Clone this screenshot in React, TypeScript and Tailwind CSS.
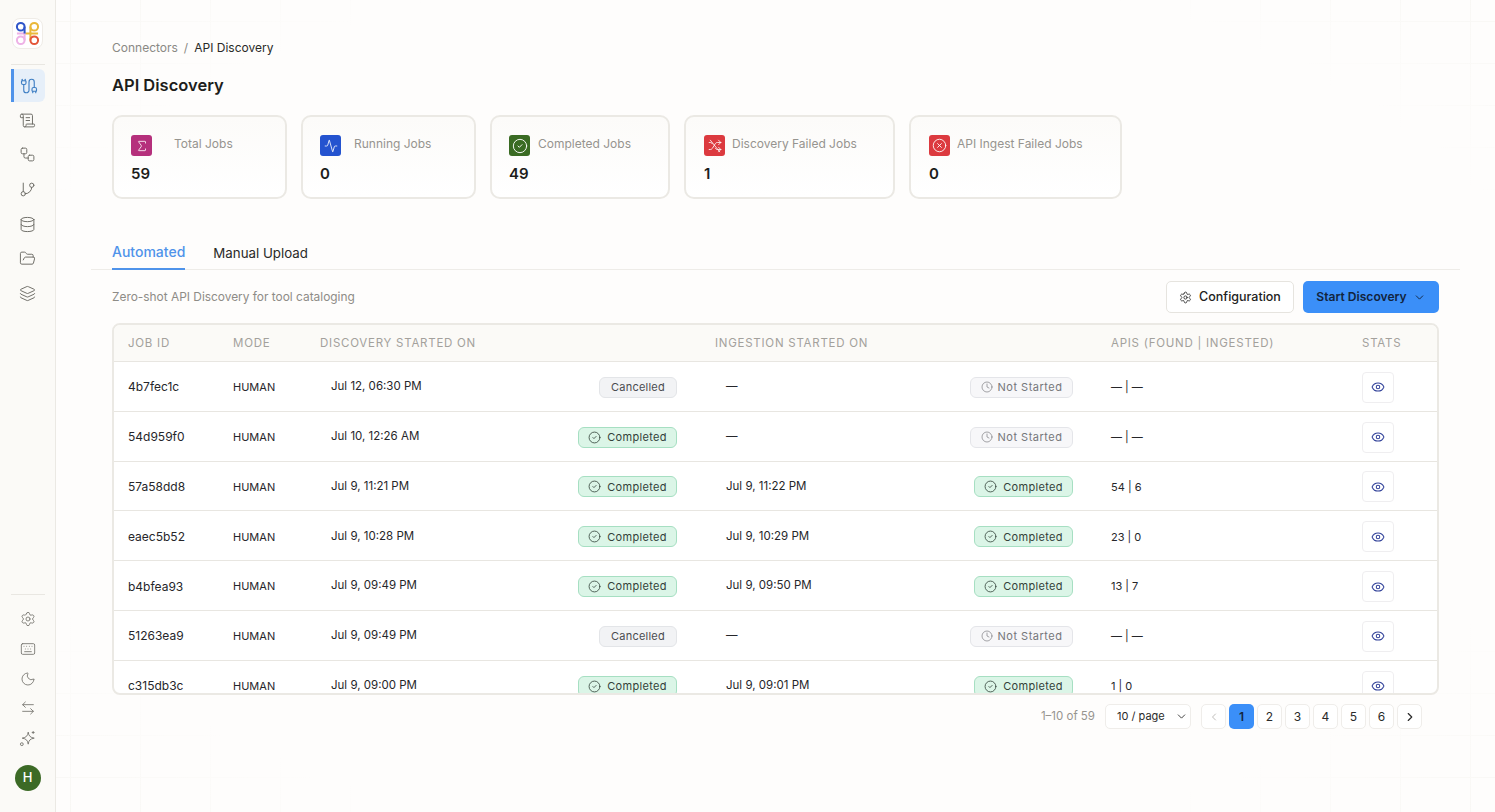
import { ChevronDown, ChevronLeft, ChevronRight, CircleCheck, CircleX, Clock, Database, Eye, FolderOpen, GitBranch, Keyboard, Layers, Moon, ArrowLeftRight, Settings, Sigma, Activity, ScrollText, Workflow, Cable } from "lucide-react";

type Status = "Cancelled" | "Completed" | "Not Started";

type Job = {
  id: string;
  started: string;
  status: Status;
  ingested: string;
  ingestStatus: Status;
  apis: string;
};

const jobs: Job[] = [
  { id: "4b7fec1c", started: "Jul 12, 06:30 PM", status: "Cancelled", ingested: "—", ingestStatus: "Not Started", apis: "— | —" },
  { id: "54d959f0", started: "Jul 10, 12:26 AM", status: "Completed", ingested: "—", ingestStatus: "Not Started", apis: "— | —" },
  { id: "57a58dd8", started: "Jul 9, 11:21 PM", status: "Completed", ingested: "Jul 9, 11:22 PM", ingestStatus: "Completed", apis: "54 | 6" },
  { id: "eaec5b52", started: "Jul 9, 10:28 PM", status: "Completed", ingested: "Jul 9, 10:29 PM", ingestStatus: "Completed", apis: "23 | 0" },
  { id: "b4bfea93", started: "Jul 9, 09:49 PM", status: "Completed", ingested: "Jul 9, 09:50 PM", ingestStatus: "Completed", apis: "13 | 7" },
  { id: "51263ea9", started: "Jul 9, 09:49 PM", status: "Cancelled", ingested: "—", ingestStatus: "Not Started", apis: "— | —" },
  { id: "c315db3c", started: "Jul 9, 09:00 PM", status: "Completed", ingested: "Jul 9, 09:01 PM", ingestStatus: "Completed", apis: "1 | 0" },
];

// lucide's shuffle with a strike through it, there is no such icon in the package
function ShuffleOff({ size, strokeWidth }: { size: number; strokeWidth: number }) {
  return (
    <svg width={size} height={size} viewBox="0 0 24 24" fill="none" stroke="currentColor" strokeWidth={strokeWidth} strokeLinecap="round" strokeLinejoin="round">
      <path d="m18 14 4 4-4 4" />
      <path d="m18 2 4 4-4 4" />
      <path d="M2 18h1.973a4 4 0 0 0 3.3-1.7l5.454-8.6a4 4 0 0 1 3.3-1.7H22" />
      <path d="M2 6h1.972a4 4 0 0 1 3.6 2.2" />
      <path d="M22 18h-6.041a4 4 0 0 1-3.3-1.8l-.359-.45" />
      <path d="M4 2l16 20" />
    </svg>
  );
}

const stats = [
  { label: "Total Jobs", value: "59", box: "w-[175px] pl-[17px]", gap: "gap-[22px]", bg: "bg-[#b5307c]", icon: Sigma, iconSize: 14 },
  { label: "Running Jobs", value: "0", box: "w-[175px] pl-[17px]", gap: "gap-[13px]", bg: "bg-[#2453cf]", icon: Activity, iconSize: 14 },
  { label: "Completed Jobs", value: "49", box: "w-[180px] pl-[17px]", gap: "gap-[8px]", bg: "bg-[#3a6b23]", icon: CircleCheck, iconSize: 16 },
  { label: "Discovery Failed Jobs", value: "1", box: "w-[211px] pl-[18px]", gap: "gap-[7px]", bg: "bg-[#dc3a3f]", icon: ShuffleOff, iconSize: 14 },
  { label: "API Ingest Failed Jobs", value: "0", box: "w-[213px] pl-[18px]", gap: "gap-[7px]", bg: "bg-[#dc3a3f]", icon: CircleX, iconSize: 15 },
];

const topNav = [ScrollText, Workflow, GitBranch, Database, FolderOpen, Layers];
const bottomNav = [Settings, Keyboard, Moon, ArrowLeftRight];

function Logo() {
  return (
    <div className="flex h-[31px] w-[31px] items-center justify-center rounded-lg border border-[#efece7] bg-white">
      <svg width="27" height="27" viewBox="0 0 24 24" fill="none" strokeWidth="1.8">
        <circle cx="18" cy="6" r="3.4" stroke="#eab83a" />
        <path d="M14.6 6V18M9 12H21.4" stroke="#eab83a" />
        <circle cx="6" cy="18" r="3.4" stroke="#eeb2e6" />
        <path d="M9.4 18V12H2.6" stroke="#eeb2e6" />
        <circle cx="6" cy="6" r="3.4" stroke="#2f55c9" />
        <path d="M9.4 6V12" stroke="#2f55c9" />
        <circle cx="18" cy="18" r="3.4" stroke="#e4573a" />
      </svg>
    </div>
  );
}

function SparkIcon() {
  return (
    <svg width="17" height="17" viewBox="0 0 24 24" fill="none" stroke="currentColor" strokeWidth="1.3">
      <path d="M13 3c.7 5.5 2.9 7.6 8.5 8.5-5.6.9-7.8 3-8.5 8.5-.7-5.5-2.9-7.6-8.5-8.5C10.100 10.600 12.300 8.500 13 3Z" />
      <circle cx="4" cy="20" r="2" />
      <path d="M20 1.500v4M18 3.500h4" />
    </svg>
  );
}

function Sidebar() {
  return (
    <aside className="flex h-[812px] w-[56px] shrink-0 flex-col items-center border-r border-[#ebe9e4] bg-[#fbfaf7] pt-[18px] pb-[21px]">
      <Logo />
      <div className="mt-[15px] h-px w-[34px] bg-[#e9e7e2]" />
      <div className="mt-[4px] flex h-[33px] w-[34px] items-center justify-center rounded-r-md border-l-[3px] border-[#4f93ea] bg-[#e6eff9] text-[#3f7fc4]">
        <Cable size={18} strokeWidth={1.5} />
      </div>
      <div className="mt-[1px] flex flex-col">
        {topNav.map((Icon, i) => (
          <div key={i} className="flex h-[34.6px] w-[34px] items-center justify-center text-[#6f6e68]">
            <Icon size={17} strokeWidth={1.4} />
          </div>
        ))}
      </div>
      <div className="mt-auto h-px w-[34px] bg-[#e9e7e2]" />
      <div className="mt-[9px] flex flex-col">
        {bottomNav.map((Icon, i) => (
          <div key={i} className="flex h-[29.75px] w-[34px] items-center justify-center text-[#75746e]">
            <Icon size={16} strokeWidth={1.3} />
          </div>
        ))}
        <div className="flex h-[29.75px] w-[34px] items-center justify-center text-[#75746e]">
          <SparkIcon />
        </div>
      </div>
      <div className="mt-[12px] flex h-[26px] w-[26px] items-center justify-center rounded-full bg-[#3c6a26] text-[13px] font-medium text-white">
        H
      </div>
    </aside>
  );
}

function StatCard({ label, value, box, gap, bg, icon: Icon, iconSize }: (typeof stats)[number]) {
  return (
    <div className={`h-[84px] rounded-[10px] border-2 border-[#ebe9e4] bg-gradient-to-b from-[#fcfbf9] to-white pt-[18px] ${box}`}>
      <div className={`flex h-[21px] items-center ${gap}`}>
        <div className={`flex h-[21px] w-[21px] items-center justify-center rounded-[3px] text-white ${bg}`}>
          <Icon size={iconSize} strokeWidth={1.4} />
        </div>
        <span className="-mt-[3px] text-[12px] text-[#96948f]">{label}</span>
      </div>
      <div className="mt-[9px] text-[15px] leading-[18px] font-semibold text-[#1d1d1b]">{value}</div>
    </div>
  );
}

function StatusBadge({ status }: { status: Status }) {
  if (status === "Completed") {
    return (
      <span className="flex h-[21px] w-[99px] items-center justify-center gap-[6px] rounded-[6px] border-[1.5px] border-[#a6dfc2] bg-[#dbf5e7] text-[11px] tracking-[0.03em] text-[#33423a]">
        <CircleCheck size={13} strokeWidth={1.5} />
        Completed
      </span>
    );
  }
  if (status === "Cancelled") {
    return (
      <span className="flex h-[21px] w-[78px] items-center justify-center rounded-[6px] border-[1.5px] border-[#e3e5e8] bg-[#f2f3f5] text-[11px] tracking-[0.02em] text-[#4a4c50]">
        Cancelled
      </span>
    );
  }
  return (
    <span className="flex h-[21px] w-[103px] items-center justify-center gap-[5px] rounded-[6px] border-[1.5px] border-[#e4e5e9] bg-[#f7f7f9] text-[11px] tracking-[0.045em] text-[#75767a]">
      <Clock size={12} strokeWidth={1.3} />
      Not Started
    </span>
  );
}

const gridCols = "grid grid-cols-[105px_87px_395px_396px_251px_1fr] items-center";

function JobsTable() {
  return (
    <div className="mt-[10px] h-[372px] overflow-hidden rounded-[8px] border-2 border-[#ebe9e4] bg-white">
      <div className={`${gridCols} h-[37px] border-b border-[#e8e6e1] bg-[#fbfaf7] pt-[2px] pl-[14px] text-[11.5px] tracking-[0.065em] text-[#a3a19c]`}>
        <span>JOB ID</span>
        <span>MODE</span>
        <span>DISCOVERY STARTED ON</span>
        <span>INGESTION STARTED ON</span>
        <span>APIS (FOUND | INGESTED)</span>
        <span>STATS</span>
      </div>
      {jobs.map((job) => (
        <div key={job.id} className={`${gridCols} h-[49.8px] border-b border-[#e8e6e1] pt-[2px] pl-[14px] text-[#26262a]`}>
          <span className="text-[12px]">{job.id}</span>
          <span className="text-[11px]">HUMAN</span>
          <div className="flex items-center justify-between pr-[38px] pl-[11px]">
            <span className="-mt-[1px] text-[11.5px]">{job.started}</span>
            <StatusBadge status={job.status} />
          </div>
          <div className="flex items-center justify-between pr-[38px] pl-[11px]">
            <span className="-mt-[1px] text-[11.5px]">{job.ingested}</span>
            <StatusBadge status={job.ingestStatus} />
          </div>
          <span className="text-[11px]">{job.apis}</span>
          <div className="flex h-[31px] w-[32px] items-center justify-center rounded-[4px] border border-[#efeef0] bg-white text-[#33439a]">
            <Eye size={14} strokeWidth={1.8} />
          </div>
        </div>
      ))}
    </div>
  );
}

function Pagination() {
  const pageButton = "flex h-[25px] w-[25px] items-center justify-center rounded-[5px] border border-[#efedea] bg-white text-[12px] text-[#2a2a2a]";
  return (
    <div className="mt-[9px] flex items-center justify-end pr-[17px]">
      <span className="text-[11.5px] text-[#96948f]">1–10 of 59</span>
      <div className="ml-[10px] flex h-[25px] w-[86px] items-center justify-between rounded-[5px] border border-[#efedea] bg-white pr-[2px] pl-[11px] text-[11px] text-[#2a2a2a]">
        10 / page
        <ChevronDown size={13} strokeWidth={1.6} />
      </div>
      <div className="ml-[10px] flex gap-[3px]">
        <div className="flex h-[25px] w-[25px] items-center justify-center rounded-[5px] border border-[#efedea] bg-white text-[#a3a19c]">
          <ChevronLeft size={12} strokeWidth={1.4} />
        </div>
        <div className="flex h-[25px] w-[25px] items-center justify-center rounded-[5px] bg-[#3b8ff8] text-[12px] font-semibold text-[#14263f]">
          1
        </div>
        {["2", "3", "4", "5", "6"].map((page) => (
          <div key={page} className={pageButton}>{page}</div>
        ))}
        <div className={pageButton}>
          <ChevronRight size={14} strokeWidth={2} />
        </div>
      </div>
    </div>
  );
}

export default function App() {
  return (
    <div className="flex h-[812px] overflow-hidden bg-[#fefdfc] font-['Inter',sans-serif]">
      <Sidebar />
      <main className="w-[1439px] bg-[radial-gradient(ellipse_at_center,#fefdfc_78%,transparent_100%),linear-gradient(to_right,#f8f7f4_1px,transparent_1px),linear-gradient(to_bottom,#f8f7f4_1px,transparent_1px)] bg-[size:100%_100%,70px_42px,70px_42px] bg-[position:0_0,14px_0,0_21px] pt-[40px] pl-[56px]">
        <div className="flex items-center text-[12px] leading-[16px]">
          <span className="text-[#8a8984]">Connectors</span>
          <span className="mx-[6px] text-[#8a8984]">/</span>
          <span className="text-[#2a2a28]">API Discovery</span>
        </div>
        <h1 className="mt-[17px] text-[16.5px] leading-[24px] font-semibold text-[#1d1d1b]">API Discovery</h1>
        <div className="mt-[18px] flex gap-[14px]">
          {stats.map((stat) => (
            <StatCard key={stat.label} {...stat} />
          ))}
        </div>
        <div className="-ml-[21px] mt-[36px] flex h-[35px] w-[1369px] items-end gap-[28px] border-b border-[#eeece8] pl-[21px]">
          <div className="-mb-px flex h-[35px] items-center border-b-2 border-[#4f93ea] text-[14px] font-medium text-[#4f93ea]">
            Automated
          </div>
          <div className="flex h-[34px] items-center pt-[4px] text-[13.3px] text-[#2a2a28]">Manual Upload</div>
        </div>
        <div className="w-[1327px]">
          <div className="mt-[11px] flex h-[32px] items-center justify-between">
            <span className="text-[11.9px] text-[#8e8c87]">Zero-shot API Discovery for tool cataloging</span>
            <div className="flex gap-[9px]">
              <button className="flex h-[32px] w-[128px] items-center justify-center gap-[7px] rounded-[5px] border border-[#e6e4df] bg-white text-[12.5px] font-medium text-[#222]">
                <Settings size={13} strokeWidth={1.5} />
                Configuration
              </button>
              <button className="flex h-[32px] w-[136px] items-center justify-center gap-[6px] rounded-[5px] bg-[#3b8ff8] text-[12.1px] font-semibold text-[#12243d]">
                Start Discovery
                <ChevronDown size={13} strokeWidth={1.7} />
              </button>
            </div>
          </div>
          <JobsTable />
          <Pagination />
        </div>
      </main>
    </div>
  );
}
